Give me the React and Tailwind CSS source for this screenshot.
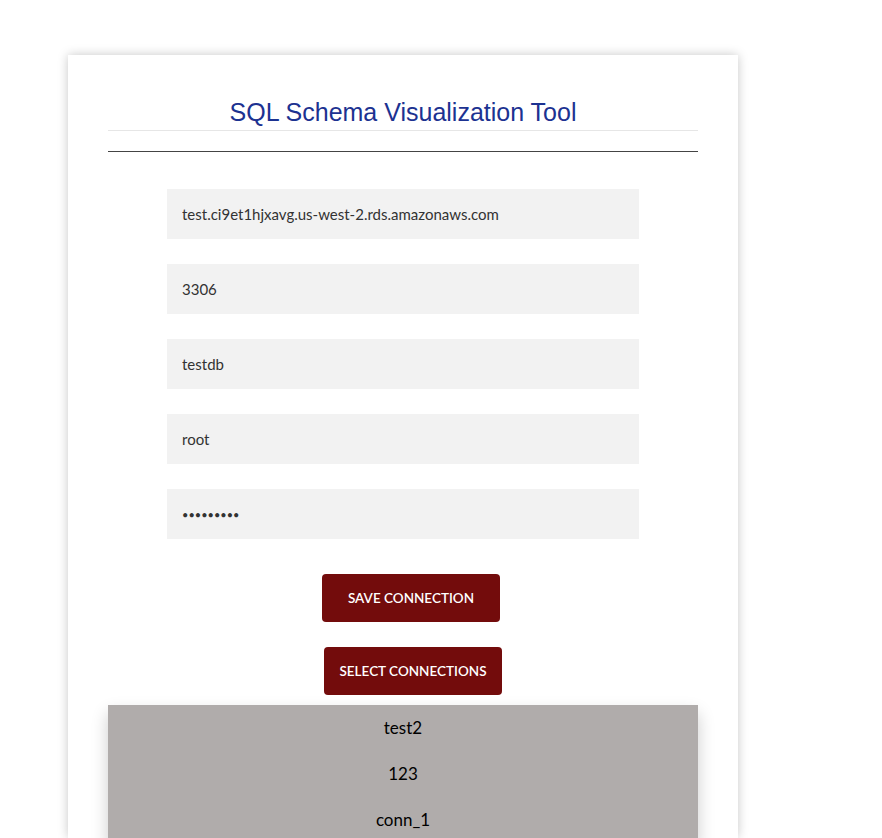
import { useState } from "react";

const fields = [
  { name: "host", value: "test.ci9et1hjxavg.us-west-2.rds.amazonaws.com", type: "text" },
  { name: "port", value: "3306", type: "text" },
  { name: "database", value: "testdb", type: "text" },
  { name: "user", value: "root", type: "text" },
  { name: "password", value: "123456789", type: "password" },
];

const connections = ["test2", "123", "conn_1"];

export default function App() {
  const [values, setValues] = useState(
    Object.fromEntries(fields.map((f) => [f.name, f.value]))
  );

  return (
    <div className="min-h-[838px] bg-white pt-[55px] pl-[68px] overflow-hidden">
      <div className="w-[670px] h-[783px] bg-white px-[40px] shadow-[0_0_10px_rgba(0,0,0,0.22)]">
        <h1 className="pt-[41px] pb-[2px] text-center text-[25px] leading-[32px] text-[#1c3291] border-b border-[#e6e6e6] font-['Liberation_Sans',Arial,sans-serif]">
          SQL Schema Visualization Tool
        </h1>
        <hr className="mt-[20px] border-0 border-t border-[#444]" />

        <form className="flex flex-col items-center gap-[25px] pt-[37px]">
          {fields.map((f) => (
            <input
              key={f.name}
              type={f.type}
              value={values[f.name]}
              onChange={(e) => setValues({ ...values, [f.name]: e.target.value })}
              className={`w-[472px] h-[50px] bg-[#f2f2f2] px-[15px] text-[#333] outline-none font-['Lato','Open_Sans',sans-serif] ${
                f.type === "password" ? "text-[11px]" : "text-[15px]"
              }`}
            />
          ))}
        </form>

        <div className="flex flex-col pt-[35px] font-['Lato','Open_Sans',sans-serif]">
          <button className="ml-[214px] w-[178px] h-[48px] rounded-[4px] bg-[#730c0c] text-white text-[13.5px] font-semibold">
            SAVE CONNECTION
          </button>
          <button className="ml-[216px] mt-[25px] w-[178px] h-[48px] rounded-[4px] bg-[#730c0c] text-white text-[13.5px] font-semibold">
            SELECT CONNECTIONS
          </button>
          <ul className="mt-[10px] bg-[#b0acab] shadow-[0_8px_16px_rgba(0,0,0,0.2)] text-[17px] text-black">
            {connections.map((c) => (
              <li key={c} className="h-[46px] flex items-center justify-center">
                {c}
              </li>
            ))}
          </ul>
        </div>
      </div>
    </div>
  );
}
